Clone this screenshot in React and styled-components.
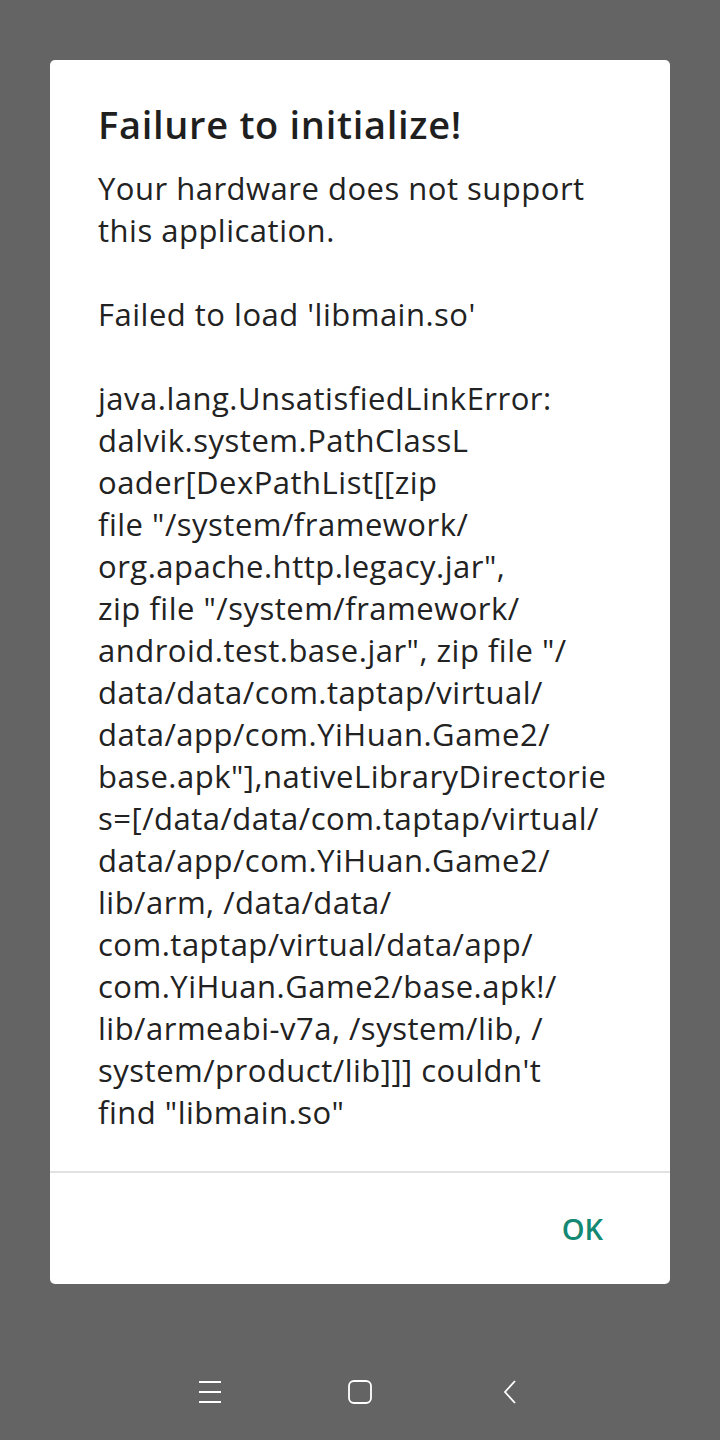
import React from 'react';
import styled, { createGlobalStyle } from 'styled-components';

const GlobalStyle = createGlobalStyle`
  html, body {
    margin: 0;
    padding: 0;
    background: #646464;
  }
  * { box-sizing: border-box; }
`;

const Screen = styled.div`
  width: 720px;
  height: 1440px;
  background: #646464;
  display: flex;
  flex-direction: column;
  align-items: center;
  padding-top: 60px;
  font-family: 'Open Sans', 'Noto Sans', sans-serif;
`;

const Dialog = styled.div`
  width: 620px;
  background: #fff;
  border-radius: 5px;
  overflow: hidden;
`;

const Content = styled.div`
  padding: 40px 48px 38px 48px;
`;

const Title = styled.h1`
  margin: 0 0 19px;
  font-size: 38px;
  line-height: 48px;
  font-weight: 600;
  letter-spacing: 0.7px;
  color: #1f1f1f;
  white-space: nowrap;
`;

const Message = styled.div`
  font-size: 31px;
  line-height: 42px;
  letter-spacing: 0.5px;
  color: #222;
`;

const Line = styled.div`
  white-space: pre;
  height: 42px;
`;

const Divider = styled.div`
  height: 2px;
  background: #e2e2e2;
`;

const Footer = styled.div`
  height: 111px;
  display: flex;
  align-items: center;
  justify-content: flex-end;
  padding-right: 67px;
`;

const OkButton = styled.button`
  border: none;
  background: none;
  padding: 0;
  font-family: inherit;
  font-size: 29px;
  font-weight: 600;
  color: #138872;
`;

const NavBar = styled.div`
  margin-top: auto;
  width: 100%;
  height: 96px;
  display: flex;
  align-items: center;
  justify-content: center;
  gap: 126px;
`;

const NavIcon = styled.svg`
  width: 24px;
  height: 24px;
  display: block;
`;

const lines = [
  'Your hardware does not support',
  'this application.',
  '',
  "Failed to load 'libmain.so'",
  '',
  'java.lang.UnsatisfiedLinkError:',
  'dalvik.system.PathClassL',
  'oader[DexPathList[[zip',
  'file "/system/framework/',
  'org.apache.http.legacy.jar",',
  'zip file "/system/framework/',
  'android.test.base.jar", zip file "/',
  'data/data/com.taptap/virtual/',
  'data/app/com.YiHuan.Game2/',
  'base.apk"],nativeLibraryDirectorie',
  's=[/data/data/com.taptap/virtual/',
  'data/app/com.YiHuan.Game2/',
  'lib/arm, /data/data/',
  'com.taptap/virtual/data/app/',
  'com.YiHuan.Game2/base.apk!/',
  'lib/armeabi-v7a, /system/lib, /',
  "system/product/lib]]] couldn't",
  'find "libmain.so"',
];

export default function App() {
  return (
    <>
      <GlobalStyle />
      <Screen>
        <Dialog>
          <Content>
            <Title>Failure to initialize!</Title>
            <Message>
              {lines.map((l, i) => (
                <Line key={i}>{l}</Line>
              ))}
            </Message>
          </Content>
          <Divider />
          <Footer>
            <OkButton>OK</OkButton>
          </Footer>
        </Dialog>
        <NavBar>
          <NavIcon viewBox="0 0 24 24" fill="none" stroke="#fff" strokeWidth="1.8">
            <path d="M1 2h22M1 12h22M1 22h22" />
          </NavIcon>
          <NavIcon viewBox="0 0 24 24" fill="none" stroke="#fff" strokeWidth="1.8">
            <rect x="1" y="1" width="22" height="22" rx="5" />
          </NavIcon>
          <NavIcon viewBox="0 0 24 24" fill="none" stroke="#fff" strokeWidth="1.8">
            <path d="M17 1L7 12l10 11" />
          </NavIcon>
        </NavBar>
      </Screen>
    </>
  );
}
